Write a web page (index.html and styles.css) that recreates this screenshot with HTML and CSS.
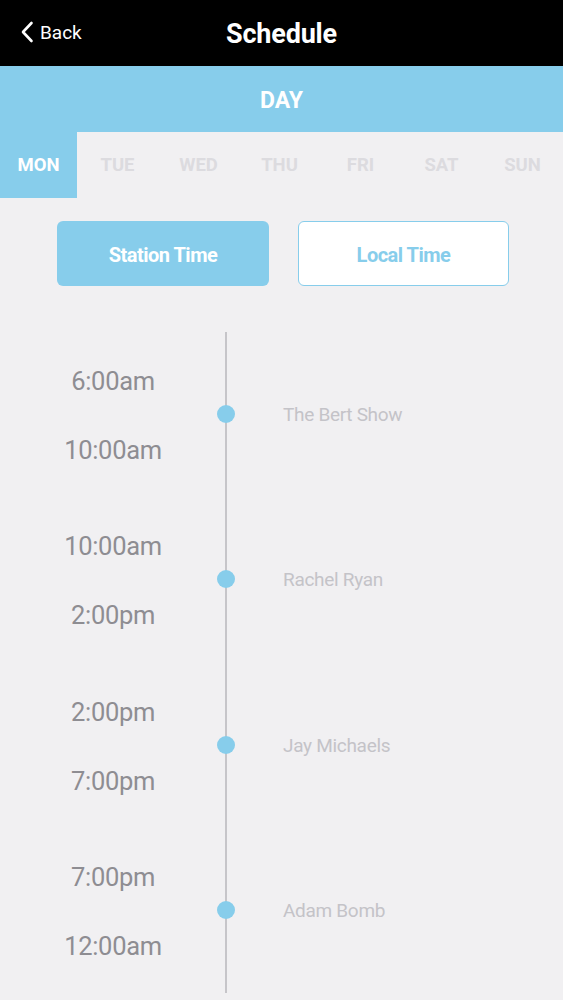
FILE: index.html
```html
<!DOCTYPE html>
<html>
<head>
<meta charset="utf-8">
<link rel="stylesheet" href="styles.css">
</head>
<body>
<header class="nav">
  <div class="back">
    <svg class="chev" width="14" height="22" viewBox="0 0 14 22"><path d="M11.5 2 L3 11 L11.5 20" fill="none" stroke="#fff" stroke-width="2.6" stroke-linecap="round" stroke-linejoin="round"/></svg>
    <span>Back</span>
  </div>
  <div class="title">Schedule</div>
</header>
<div class="dayband">DAY</div>
<nav class="days">
  <div class="day active">MON</div>
  <div class="day">TUE</div>
  <div class="day">WED</div>
  <div class="day">THU</div>
  <div class="day">FRI</div>
  <div class="day">SAT</div>
  <div class="day">SUN</div>
</nav>
<div class="toggles">
  <div class="btn filled">Station Time</div>
  <div class="btn outline">Local Time</div>
</div>
<section class="timeline">
  <div class="row">
    <div class="times"><span>6:00am</span><span>10:00am</span></div>
    <div class="axis"><i class="dot"></i></div>
    <div class="show">The Bert Show</div>
  </div>
  <div class="row">
    <div class="times"><span>10:00am</span><span>2:00pm</span></div>
    <div class="axis"><i class="dot"></i></div>
    <div class="show">Rachel Ryan</div>
  </div>
  <div class="row">
    <div class="times"><span>2:00pm</span><span>7:00pm</span></div>
    <div class="axis"><i class="dot"></i></div>
    <div class="show">Jay Michaels</div>
  </div>
  <div class="row">
    <div class="times"><span>7:00pm</span><span>12:00am</span></div>
    <div class="axis"><i class="dot"></i></div>
    <div class="show">Adam Bomb</div>
  </div>
</section>
</body>
</html>
```
FILE: styles.css
```css
* { box-sizing: border-box; }
html, body { margin: 0; padding: 0; }
body {
  width: 563px;
  height: 1000px;
  overflow: hidden;
  background: #f1f0f2;
  font-family: Roboto, "Liberation Sans", sans-serif;
}
.nav {
  height: 66px;
  background: #000;
  display: grid;
  grid-template-columns: 1fr auto 1fr;
  align-items: center;
  color: #fff;
}
.back {
  display: flex;
  align-items: center;
  gap: 6px;
  padding-left: 20px;
  font-size: 19px;
  padding-bottom: 2px;
}
.chev { display: block; }
.title {
  font-size: 27px;
  font-weight: 700;
  letter-spacing: -0.2px;
  padding-top: 2px;
}
.dayband {
  height: 66px;
  background: #87cdeb;
  color: #fff;
  font-weight: 700;
  font-size: 23px;
  display: flex;
  align-items: center;
  justify-content: center;
  padding-top: 2px;
}
.days {
  height: 66px;
  display: grid;
  grid-template-columns: 77px repeat(6, 1fr);
}
.day {
  display: flex;
  align-items: center;
  justify-content: center;
  font-size: 18.5px;
  font-weight: 700;
  color: #dcdbdf;
}
.day.active { background: #87cdeb; color: #fff; }
.toggles {
  display: flex;
  gap: 29px;
  padding: 23px 0 0 57px;
}
.btn {
  width: 212px;
  height: 65px;
  border-radius: 6px;
  display: flex;
  align-items: center;
  justify-content: center;
  font-size: 20px;
  font-weight: 700;
  letter-spacing: -0.5px;
  padding-top: 2px;
}
.btn.filled { background: #87cdeb; color: #fff; }
.btn.outline { background: #fff; border: 1.5px solid #87cdeb; color: #87cdeb; width: 211px; }
.timeline { padding-top: 46px; }
.row {
  height: 165.25px;
  display: grid;
  grid-template-columns: 217px 18px 1fr;
}
.times {
  display: flex;
  flex-direction: column;
  align-items: center;
  padding-top: 34px;
  padding-left: 9px;
  gap: 39px;
  font-size: 25.5px;
  color: #8e8d92;
  line-height: 30px;
  letter-spacing: -0.3px;
}
.axis {
  background: linear-gradient(to right, transparent 8px, #c6c5c9 8px, #c6c5c9 10px, transparent 10px);
  display: flex;
  justify-content: center;
  padding-top: 73px;
}
.dot {
  display: block;
  width: 18px;
  height: 18px;
  border-radius: 50%;
  background: #87cdeb;
}
.show {
  padding-left: 48px;
  padding-top: 72px;
  font-size: 19px;
  color: #c4c3c8;
  letter-spacing: -0.3px;
  line-height: 22px;
}
```
